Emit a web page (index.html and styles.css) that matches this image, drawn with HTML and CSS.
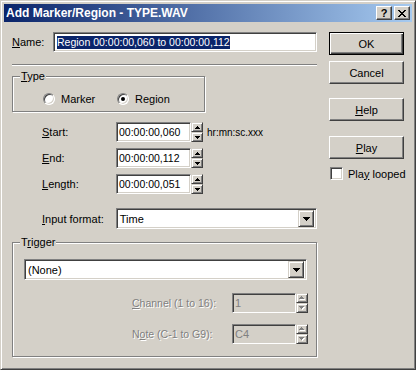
FILE: index.html
```html
<!DOCTYPE html>
<html>
<head>
<meta charset="utf-8">
<title>Add Marker/Region</title>
<link rel="stylesheet" href="styles.css">
</head>
<body>
<div class="win">
  <div class="titlebar">
    <span class="title">Add Marker/Region - TYPE.WAV</span>
    <span class="tbtn help">?</span>
    <span class="tbtn close"><svg width="8" height="7" viewBox="0 0 8 7"><path d="M0 0h2v1h1v1h2V1h1V0h2v1H7v1H6v1H5v1h1v1h1v1h1v1H6V6H5V5H3v1H2v1H0V6h1V5h1V4h1V3H2V2H1V1H0z" fill="#000"/></svg></span>
  </div>
  <div class="client">
    <div class="main">
      <div class="row name-row">
        <span class="lbl name-lbl"><u>N</u>ame:</span>
        <div class="edit name-edit"><span class="sel">Region 00:00:00,060 to 00:00:00,112</span></div>
      </div>
      <div class="sep"></div>
      <div class="group type-group">
        <span class="legend"><u>T</u>ype</span>
        <div class="radios">
          <div class="ropt"><span class="radio"></span><span>Marker</span></div>
          <div class="ropt"><span class="radio on"></span><span>Region</span></div>
        </div>
      </div>
      <div class="fields">
        <div class="frow">
          <span class="lbl flbl"><u>S</u>tart:</span>
          <div class="edit time">00:00:00,060</div>
          <div class="spin"><span class="sb"><svg width="5" height="3"><path d="M2 0h1v1h1v1h1v1H0V2h1V1h1z"/></svg></span><span class="sb"><svg width="5" height="3"><path d="M0 0h5v1H4v1H3v1H2V2H1V1H0z"/></svg></span></div>
          <span class="hint">hr:mn:sc.xxx</span>
        </div>
        <div class="frow">
          <span class="lbl flbl"><u>E</u>nd:</span>
          <div class="edit time">00:00:00,112</div>
          <div class="spin"><span class="sb"><svg width="5" height="3"><path d="M2 0h1v1h1v1h1v1H0V2h1V1h1z"/></svg></span><span class="sb"><svg width="5" height="3"><path d="M0 0h5v1H4v1H3v1H2V2H1V1H0z"/></svg></span></div>
        </div>
        <div class="frow">
          <span class="lbl flbl"><u>L</u>ength:</span>
          <div class="edit time">00:00:00,051</div>
          <div class="spin"><span class="sb"><svg width="5" height="3"><path d="M2 0h1v1h1v1h1v1H0V2h1V1h1z"/></svg></span><span class="sb"><svg width="5" height="3"><path d="M0 0h5v1H4v1H3v1H2V2H1V1H0z"/></svg></span></div>
        </div>
        <div class="frow format-row">
          <span class="lbl flbl"><u>I</u>nput format:</span>
          <div class="combo format-combo"><span class="ctext">Time</span><span class="ddb"><svg width="7" height="4"><path d="M0 0h7v1H6v1H5v1H4v1H3V3H2V2H1V1H0z"/></svg></span></div>
        </div>
      </div>
      <div class="group trig-group">
        <span class="legend">T<u>r</u>igger</span>
        <div class="combo trig-combo"><span class="ctext">(None)</span><span class="ddb"><svg width="7" height="4"><path d="M0 0h7v1H6v1H5v1H4v1H3V3H2V2H1V1H0z"/></svg></span></div>
        <div class="trow first">
          <span class="lbl tlbl dis"><u>C</u>hannel (1 to 16):</span>
          <div class="edit dedit">1</div>
          <div class="spin dspin"><span class="sb"><svg width="6" height="4"><path d="M3 1h1v1h1v1h1v1H1V3h1V2h1z" fill="#fff"/><path d="M2 0h1v1h1v1h1v1H0V2h1V1h1z" fill="#808080"/></svg></span><span class="sb"><svg width="6" height="4"><path d="M1 1h5v1H5v1H4v1H3V3H2V2H1z" fill="#fff"/><path d="M0 0h5v1H4v1H3v1H2V2H1V1H0z" fill="#808080"/></svg></span></div>
        </div>
        <div class="trow">
          <span class="lbl tlbl dis">N<u>o</u>te (C-1 to G9):</span>
          <div class="edit dedit">C4</div>
          <div class="spin dspin"><span class="sb"><svg width="6" height="4"><path d="M3 1h1v1h1v1h1v1H1V3h1V2h1z" fill="#fff"/><path d="M2 0h1v1h1v1h1v1H0V2h1V1h1z" fill="#808080"/></svg></span><span class="sb"><svg width="6" height="4"><path d="M1 1h5v1H5v1H4v1H3V3H2V2H1z" fill="#fff"/><path d="M0 0h5v1H4v1H3v1H2V2H1V1H0z" fill="#808080"/></svg></span></div>
        </div>
      </div>
    </div>
    <div class="side">
      <div class="btn default">OK</div>
      <div class="btn cancel">Cancel</div>
      <div class="btn helpb"><u>H</u>elp</div>
      <div class="btn play"><u>P</u>lay</div>
      <div class="check-row"><span class="check"></span><span>Pla<u>y</u> looped</span></div>
    </div>
  </div>
</div>
</body>
</html>
```

FILE: styles.css
```css
* { box-sizing: border-box; }
html, body { margin: 0; padding: 0; }
body {
  width: 416px;
  height: 370px;
  overflow: hidden;
  background: #D4D0C8;
  font-family: "Liberation Sans", Arial, sans-serif;
  font-size: 10px;
  color: #000;
}
u { text-decoration: underline; text-underline-offset: 1px; }

.win {
  width: 416px;
  height: 370px;
  border: 1px solid;
  border-color: #D4D0C8 #404040 #404040 #D4D0C8;
  box-shadow: inset 1px 1px #fff, inset -1px -1px #808080;
  padding: 3px;
  display: flex;
  flex-direction: column;
}

.titlebar {
  flex: none;
  height: 18px;
  margin-bottom: 1px;
  background: linear-gradient(to right, #0A246A, #A6CAF0);
  display: flex;
  align-items: center;
  padding: 0 2px 0 2px;
}
.title {
  flex: 1;
  color: #fff;
  font-weight: bold;
  font-size: 12px;
  padding-left: 0;
  white-space: nowrap;
}
.tbtn {
  width: 16px;
  height: 14px;
  background: #D4D0C8;
  border: 1px solid;
  border-color: #fff #404040 #404040 #fff;
  box-shadow: inset -1px -1px #808080;
  display: flex;
  align-items: center;
  justify-content: center;
  font-weight: bold;
  font-size: 11px;
  line-height: 1;
}
.tbtn.close { margin-left: 2px; }
.tbtn svg { display: block; }

.client {
  flex: 1;
  display: flex;
  padding: 9px 0 0 8px;
}
.main { width: 305px; flex: none; }
.side {
  width: 75px;
  margin-left: 12px;
  display: flex;
  flex-direction: column;
  font-size: 11px;
}

.row, .frow, .trow { display: flex; align-items: center; }
.lbl { white-space: nowrap; font-size: 11px; }
.hint { font-size: 10px; }
.tlbl { font-size: 10.5px; }

.edit {
  background: #fff;
  border: 1px solid;
  border-color: #808080 #fff #fff #808080;
  box-shadow: inset 1px 1px #404040, inset -1px -1px #D4D0C8;
  display: flex;
  align-items: center;
  padding: 0 0 0 2px;
  white-space: nowrap;
  overflow: hidden;
}

.name-row { height: 20px; }
.name-lbl { width: 41px; }
.name-edit { width: 264px; height: 20px; padding-left: 3px; }
.sel {
  background: #0A246A;
  color: #fff;
  line-height: 13px;
  font-size: 10.5px;
}

.sep {
  margin-top: 12px;
  height: 2px;
  border-top: 1px solid #808080;
  border-bottom: 1px solid #fff;
}

.group {
  position: relative;
  border: 1px solid #808080;
  box-shadow: inset 1px 1px #fff, 1px 1px #fff;
}
.legend {
  position: absolute;
  top: -7px;
  left: 7px;
  padding: 0 1px;
  background: #D4D0C8;
  line-height: 13px;
  font-size: 11px;
}

.type-group {
  margin-top: 10px;
  width: 193px;
  height: 36px;
}
.radios {
  display: flex;
  margin: 16px 0 0 30px;
  height: 12px;
  align-items: center;
  font-size: 11px;
}
.ropt { display: flex; align-items: center; width: 74px; }
.ropt span + span { margin-left: 6px; }
.radio {
  width: 12px;
  height: 12px;
  flex: none;
  border-radius: 50%;
  background: #fff;
  border: 1px solid;
  border-color: #808080 #fff #fff #808080;
  box-shadow: inset 1px 1px #404040, inset -1px -1px #D4D0C8;
  position: relative;
}
.radio.on::after {
  content: "";
  position: absolute;
  left: 3px;
  top: 3px;
  width: 4px;
  height: 4px;
  border-radius: 50%;
  background: #000;
}

.fields { margin-top: 10px; }
.frow { height: 20px; margin-bottom: 6px; }
.flbl { margin-left: 30px; width: 74px; }
.time { width: 75px; height: 20px; font-size: 10.5px; }
.spin {
  width: 12px;
  height: 20px;
  display: flex;
  flex-direction: column;
  flex: none;
}
.sb {
  flex: 1;
  background: #D4D0C8;
  border: 1px solid;
  border-color: #D4D0C8 #404040 #404040 #D4D0C8;
  box-shadow: inset 1px 1px #fff, inset -1px -1px #808080;
  display: flex;
  align-items: center;
  justify-content: center;
}
.sb svg { display: block; }
.hint { margin-left: 4px; }

.format-row { height: 21px; margin-top: 14px; margin-bottom: 0; }
.combo {
  background: #fff;
  border: 1px solid;
  border-color: #808080 #fff #fff #808080;
  box-shadow: inset 1px 1px #404040, inset -1px -1px #D4D0C8;
  display: flex;
  align-items: center;
  padding: 2px;
  height: 21px;
  font-size: 11px;
}
.format-combo { width: 202px; }
.ctext { flex: 1; padding-left: 1px; }
.ddb {
  width: 16px;
  height: 17px;
  flex: none;
  background: #D4D0C8;
  border: 1px solid;
  border-color: #D4D0C8 #404040 #404040 #D4D0C8;
  box-shadow: inset 1px 1px #fff, inset -1px -1px #808080;
  display: flex;
  align-items: center;
  justify-content: center;
}
.ddb svg { display: block; }

.trig-group {
  margin-top: 13px;
  width: 305px;
  height: 115px;
}
.trig-combo {
  margin: 16px 0 0 11px;
  width: 283px;
}
.trow { height: 20px; margin-top: 11px; }
.trow.first { margin-top: 13px; }
.tlbl { margin-left: 119px; width: 100px; }
.dis { color: #808080; text-shadow: 1px 1px 0 #fff; }
.dedit {
  width: 64px;
  height: 20px;
  background: #D4D0C8;
  color: #808080;
  font-size: 11px;
}

.btn {
  height: 23px;
  background: #D4D0C8;
  border: 1px solid;
  border-color: #fff #404040 #404040 #fff;
  box-shadow: inset -1px -1px #808080, inset 1px 1px #D4D0C8;
  display: flex;
  align-items: center;
  justify-content: center;
}
.btn.default {
  border: 1px solid #000;
  box-shadow: inset 1px 1px #fff, inset -1px -1px #404040, inset -2px -2px #808080;
}
.cancel { margin-top: 6px; }
.helpb { margin-top: 14px; }
.play { margin-top: 15px; }
.check-row {
  display: flex;
  align-items: center;
  margin-top: 8px;
  margin-left: 1px;
  white-space: nowrap;
}
.check {
  width: 13px;
  height: 13px;
  flex: none;
  background: #fff;
  border: 1px solid;
  border-color: #808080 #fff #fff #808080;
  box-shadow: inset 1px 1px #404040, inset -1px -1px #D4D0C8;
  margin-right: 5px;
}
```
